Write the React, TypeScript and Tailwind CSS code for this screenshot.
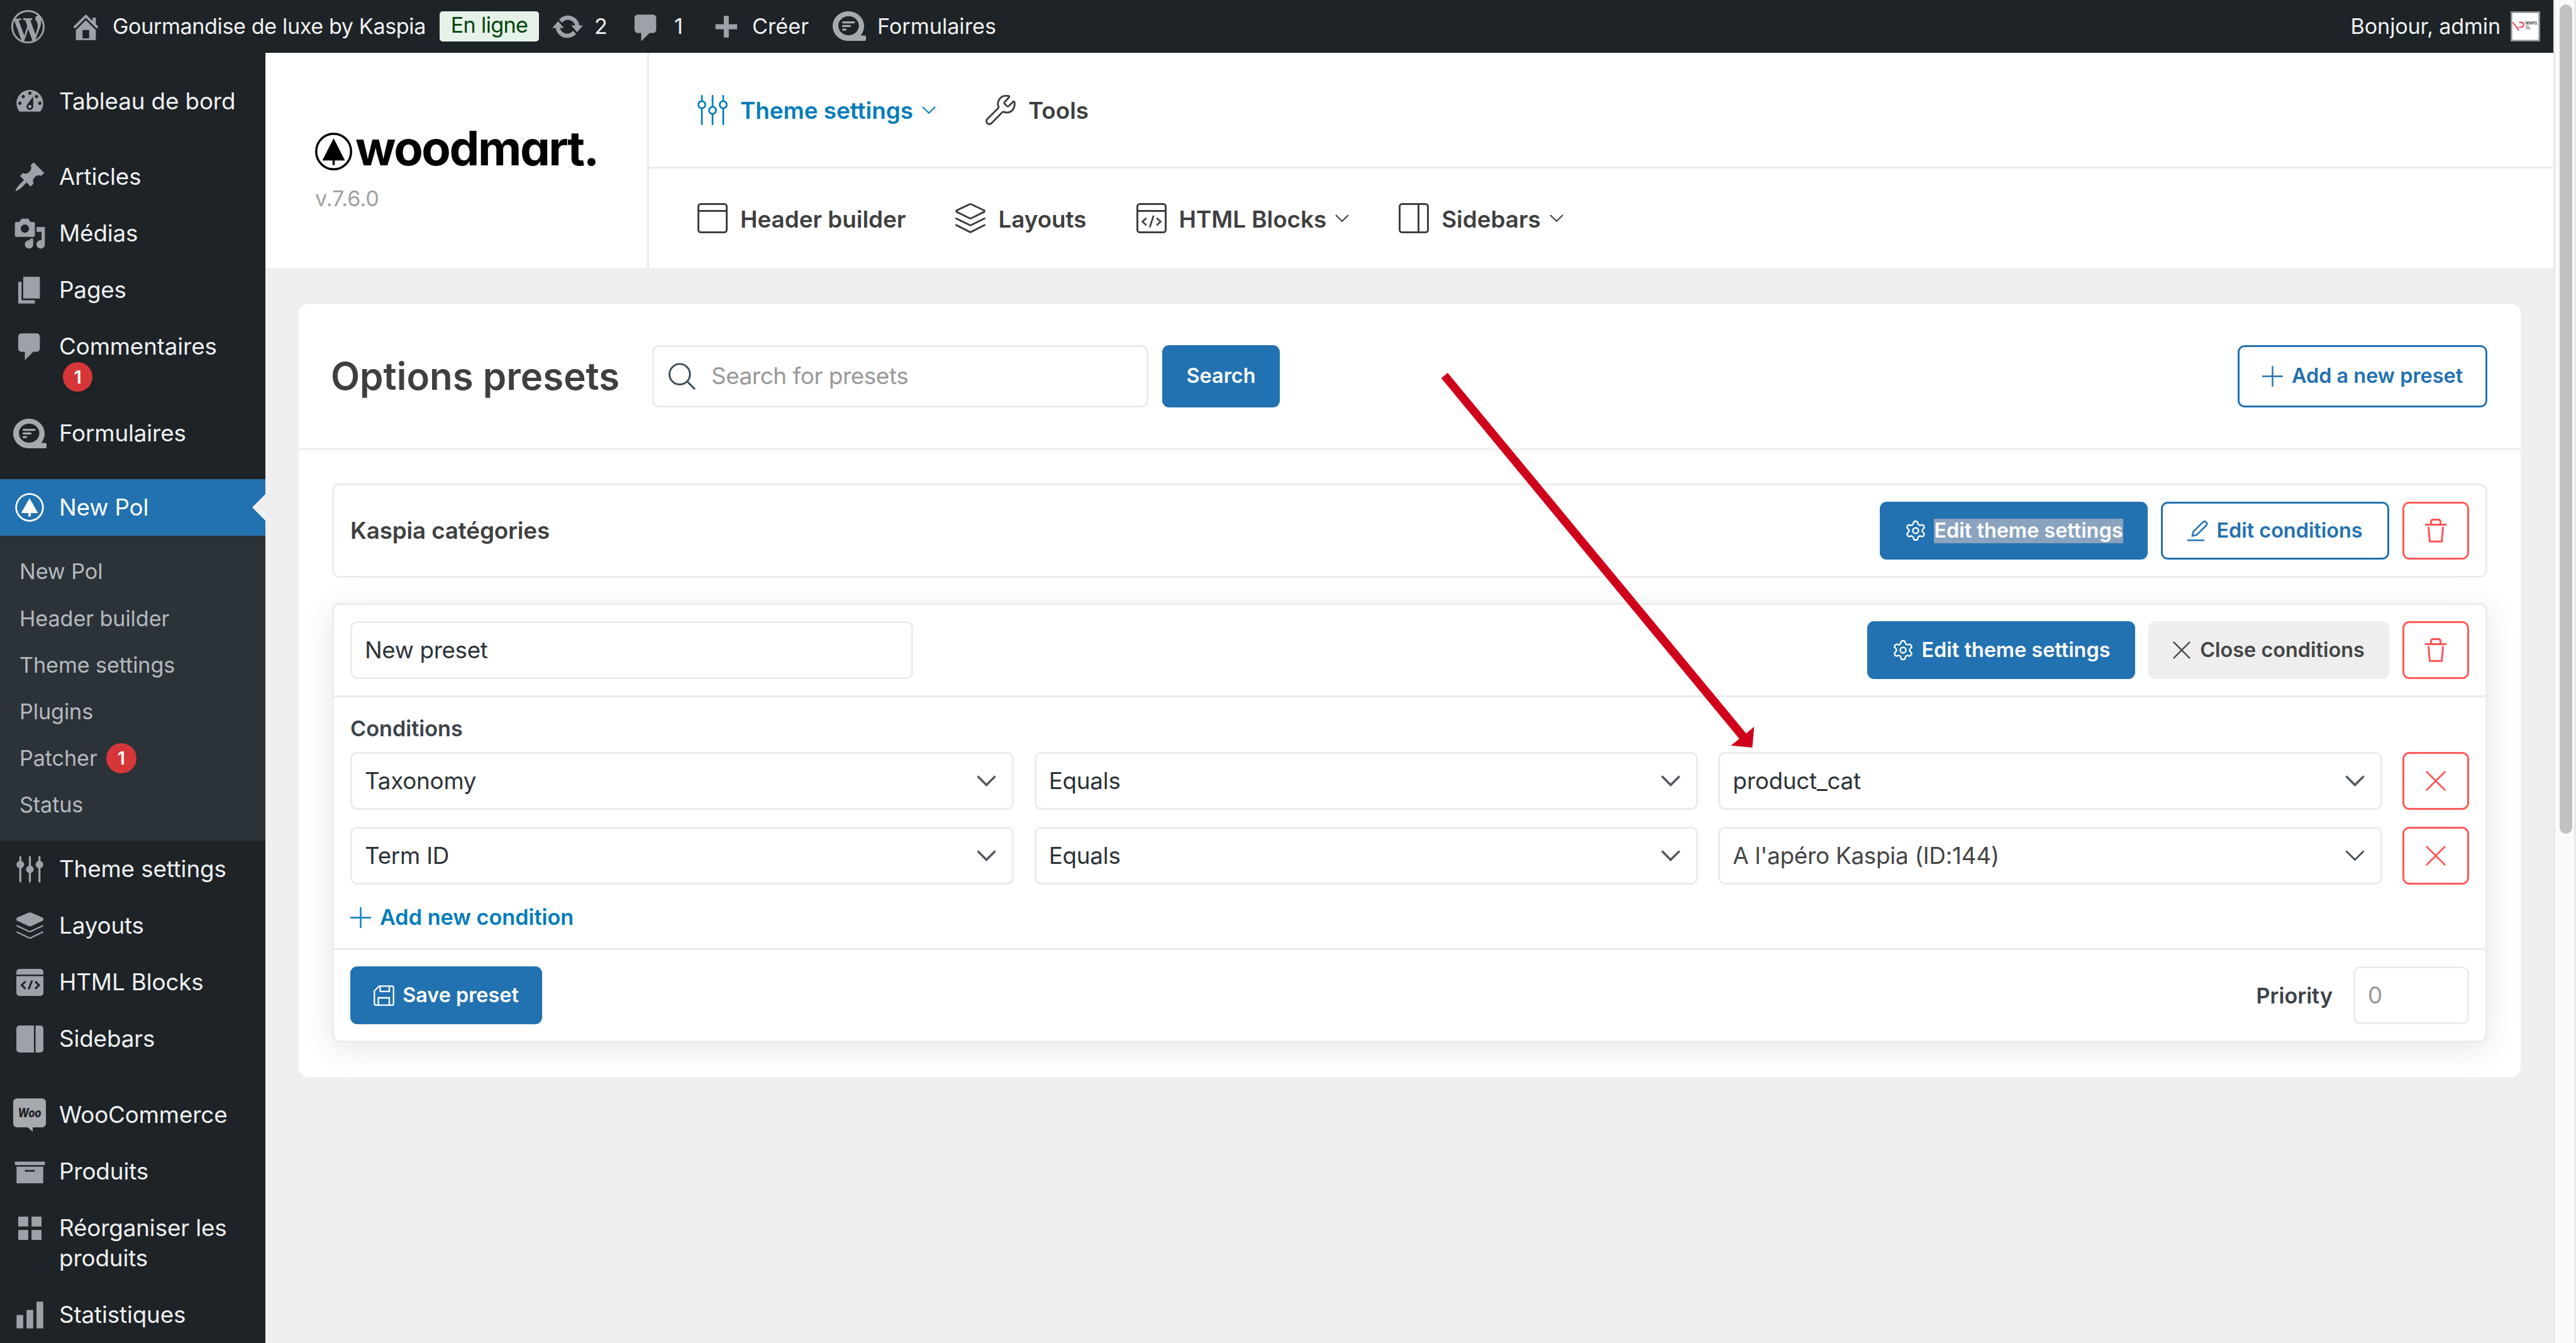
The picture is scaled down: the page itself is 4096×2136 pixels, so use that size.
import { Settings } from "lucide-react";

const dashicons = {
  wordpress:
    "M20 10c0-5.51-4.49-10-10-10C4.48 0 0 4.49 0 10c0 5.52 4.48 10 10 10 5.51 0 10-4.48 10-10zM7.78 15.37L4.37 6.22c.55-.02 1.17-.08 1.17-.08.5-.06.44-1.13-.06-1.11 0 0-1.45.11-2.37.11-.18 0-.37 0-.58-.01C4.12 2.69 6.87 1.11 10 1.11c2.33 0 4.45.87 6.05 2.34-.68-.11-1.65.39-1.65 1.58 0 .74.45 1.36.9 2.1.35.61.55 1.36.55 2.46 0 1.49-1.4 5-1.4 5l-3.03-8.37c.54-.02.82-.17.82-.17.5-.05.44-1.25-.06-1.22 0 0-1.44.12-2.38.12-.87 0-2.33-.12-2.33-.12-.5-.03-.56 1.2-.06 1.22l.92.08 1.26 3.41zM17.41 10c.24-.64.74-1.87.43-4.25.7 1.29 1.05 2.71 1.05 4.25 0 3.29-1.73 6.24-4.4 7.78.97-2.59 1.94-5.2 2.92-7.78zM6.1 18.09C3.12 16.65 1.11 13.53 1.11 10c0-1.3.23-2.48.72-3.59C3.25 10.3 4.67 14.2 6.1 18.09zm4.03-6.63l2.58 6.98c-.86.29-1.76.45-2.71.45-.79 0-1.57-.11-2.29-.33.81-2.38 1.62-4.74 2.42-7.1z",
  home: "M16 8.5l1.53 1.53-1.06 1.06L10 4.6l-6.47 6.49-1.06-1.06L10 2.5l4 4v-2h2v4zm-6-2.46l6 5.99V18H4v-5.97zM12 17v-5H8v5h4z",
  update:
    "M10.2 3.28c3.53 0 6.43 2.61 6.92 6h2.08l-3.5 4-3.5-4h2.32c-.45-1.97-2.21-3.45-4.32-3.45-1.45 0-2.73.71-3.54 1.78L4.95 5.66C6.23 4.2 8.11 3.28 10.2 3.28zm-.4 13.44c-3.52 0-6.43-2.61-6.92-6H.8l3.5-4c1.17 1.33 2.33 2.67 3.5 4H5.48c.45 1.97 2.21 3.45 4.32 3.45 1.45 0 2.73-.71 3.54-1.78l1.71 1.95c-1.28 1.46-3.15 2.38-5.25 2.38z",
  comments:
    "M5 2h9c1.1 0 2 .9 2 2v7c0 1.1-.9 2-2 2h-2l-5 5v-5H5c-1.1 0-2-.9-2-2V4c0-1.1.9-2 2-2z",
  plus: "M17 7v3h-5v5H9v-5H4V7h5V2h3v5h5z",
  dashboard:
    "M3.76 16h12.48c1.1-1.37 1.76-3.11 1.76-5 0-4.42-3.58-8-8-8s-8 3.58-8 8c0 1.89.66 3.63 1.76 5zM10 4c.55 0 1 .45 1 1s-.45 1-1 1-1-.45-1-1 .45-1 1-1zM6 6c.55 0 1 .45 1 1s-.45 1-1 1-1-.45-1-1 .45-1 1-1zm8 0c.55 0 1 .45 1 1s-.45 1-1 1-1-.45-1-1 .45-1 1-1zm-5.37 5.55L12 7v6c0 1.1-.9 2-2 2s-2-.9-2-2c0-.57.24-1.08.63-1.45zM4 10c.55 0 1 .45 1 1s-.45 1-1 1-1-.45-1-1 .45-1 1-1zm12 0c.55 0 1 .45 1 1s-.45 1-1 1-1-.45-1-1 .45-1 1-1zm-5 3c0-.55-.45-1-1-1s-1 .45-1 1 .45 1 1 1 1-.45 1-1z",
  post: "M10.44 3.02l1.82-1.82 6.36 6.35-1.83 1.82c-1.05-.68-2.48-.57-3.41.36l-.75.75c-.92.93-1.04 2.35-.35 3.41l-1.83 1.82-2.41-2.41-2.8 2.79c-.42.42-3.38 2.71-3.8 2.29s1.86-3.39 2.28-3.81l2.79-2.79L4.1 9.36l1.83-1.82c1.05.69 2.48.57 3.4-.36l.75-.75c.93-.92 1.05-2.35.36-3.41z",
  media:
    "M13 11V4c0-.55-.45-1-1-1h-1.67L9 1H5L3.67 3H2c-.55 0-1 .45-1 1v7c0 .55.45 1 1 1h10c.55 0 1-.45 1-1zM7 4.5c1.38 0 2.5 1.12 2.5 2.5S8.38 9.5 7 9.5 4.5 8.38 4.5 7 5.62 4.5 7 4.5zM14 6h5v10.5c0 1.38-1.12 2.5-2.5 2.5S14 17.88 14 16.5s1.12-2.5 2.5-2.5c.17 0 .34.02.5.05V9h-3V6zm-4 8.05V13h2v3.5c0 1.38-1.12 2.5-2.5 2.5S7 17.88 7 16.5 8.12 14 9.5 14c.17 0 .34.02.5.05z",
  page: "M6 15V2h10v13H6zm-1 1h8v2H3V5h2v11z",
  archive: "M19 4v2H1V4h18zM2 7h16v10H2V7zm11 3V9H7v1h6z",
  grid: "M3 3h6v6H3V3zm8 0h6v6h-6V3zM3 11h6v6H3v-6zm8 0h6v6h-6v-6z",
  chart: "M18 18V2h-4v16h4zm-6 0V7H8v11h4zm-6 0v-8H2v8h4z",
};

function Dashicon({ name }: { name: keyof typeof dashicons }) {
  return (
    <svg viewBox="0 0 20 20" className="size-[53px] shrink-0 fill-current">
      <path fillRule="evenodd" d={dashicons[name]} />
    </svg>
  );
}

function FormsIcon() {
  return (
    <svg viewBox="0 0 53 47" className="h-[47px] w-[53px] shrink-0 fill-[#a7aaad]">
      <path
        fillRule="evenodd"
        d="M25 0C38.8 0 50 10.5 50 23.5c0 5.6-2 10.7-5.5 15H51a2 2 0 0 1 2 2V45a2 2 0 0 1-2 2H25C11.2 47 0 36.5 0 23.5S11.2 0 25 0zm.3 7.8c-9 0-16.3 6.8-16.3 15.1S16.3 38 25.3 38s16.3-6.8 16.3-15.1S34.3 7.8 25.3 7.8z"
      />
      <path d="M16.5 16h17.5a1.6 1.6 0 0 1 0 3.2h-17.5a1.6 1.6 0 0 1 0-3.2zM16.5 21.8h11a1.6 1.6 0 0 1 0 3.2h-11a1.6 1.6 0 0 1 0-3.2zM16.5 27.6h4a1.6 1.6 0 0 1 0 3.2h-4a1.6 1.6 0 0 1 0-3.2z" />
    </svg>
  );
}

function TreeIcon() {
  return (
    <svg viewBox="0 0 46 46" className="size-[46px] shrink-0 fill-current">
      <circle cx="23" cy="23" r="21.3" fill="none" stroke="currentColor" strokeWidth="2.8" />
      <path d="M23 8.5L36.5 32H25v5.5h-4V32H9.500z" />
    </svg>
  );
}

function SlidersFilled() {
  return (
    <svg viewBox="0 0 43 43" className="size-[43px] shrink-0 fill-current">
      <path
        d="M6.3 2v39M21.5 2v39M36.7 2v39"
        stroke="currentColor"
        strokeWidth="3.3"
        strokeLinecap="round"
      />
      <circle cx="6.3" cy="14" r="6.1" />
      <circle cx="21.5" cy="21.7" r="6.1" />
      <circle cx="36.7" cy="14" r="6.1" />
    </svg>
  );
}

function LayersFilled() {
  return (
    <svg viewBox="0 0 43 43" className="size-[43px] shrink-0" fill="none">
      <path
        fill="currentColor"
        d="M19.5.6a6 6 0 0 1 4 0L42 8.500c1.3.8 1.3 4 0 4.8L23.5 22a5 5 0 0 1-4 0L1 13.300c-1.3-.8-1.3-4 0-4.800z"
      />
      <path
        d="M1.2 21.5l18.700 8.8a4 4 0 0 0 3.2 0l18.700-8.800M1.2 31.5l18.700 9a4 4 0 0 0 3.2 0l18.700-9"
        stroke="currentColor"
        strokeWidth="2.3"
        strokeLinecap="round"
      />
    </svg>
  );
}

function HtmlFilled() {
  return (
    <svg viewBox="0 0 43 43" className="size-[43px] shrink-0">
      <path
        fill="currentColor"
        d="M5 0h33a5 5 0 0 1 5 5v4H0V5a5 5 0 0 1 5-5zM0 11.5h43V38a5 5 0 0 1-5 5H5a5 5 0 0 1-5-5z"
      />
      <path
        d="M14.5 20l-6 5.8 6 5.8M30 20l6 5.8-6 5.8M25 18.5l-5.500 14"
        fill="none"
        stroke="#1d2327"
        strokeWidth="3"
      />
    </svg>
  );
}

function SidebarFilled() {
  return (
    <svg viewBox="0 0 43 43" className="size-[43px] shrink-0 fill-current">
      <path d="M5 0h23v43H5a5 5 0 0 1-5-5V5a5 5 0 0 1 5-5zM30.5 0H38a5 5 0 0 1 5 5v33a5 5 0 0 1-5 5h-7.500z" />
    </svg>
  );
}

function WooIcon() {
  return (
    <svg viewBox="0 0 52 53" className="h-[53px] w-[52px] shrink-0">
      <path fill="#a7aaad" d="M6 0h40a6 6 0 0 1 6 6v34a6 6 0 0 1-6 6H31v7l-8-7H6a6 6 0 0 1-6-6V6a6 6 0 0 1 6-6z" />
      <text
        x="26"
        y="30"
        textAnchor="middle"
        textLength="37"
        lengthAdjust="spacingAndGlyphs"
        fill="#1d2327"
        fontFamily="Inter, sans-serif"
        fontWeight="800"
        fontStyle="italic"
        fontSize="20"
      >
        Woo
      </text>
    </svg>
  );
}

// Outline icons of the theme, drawn on a 48px box
function NavIcon({ name }: { name: string }) {
  return (
    <svg
      viewBox="0 0 48 48"
      className="size-12 shrink-0"
      fill="none"
      stroke="currentColor"
      strokeWidth="3"
      strokeLinejoin="round"
    >
      {name === "sliders" && (
        <g strokeLinecap="round" strokeWidth="2.7">
          <path d="M7 1.300v8M7 22v24.700M24 1.300v17M24 31v15.700M41 1.300v8M41 22v24.700" />
          <circle cx="7" cy="15.5" r="5.6" />
          <circle cx="24" cy="24.5" r="5.6" />
          <circle cx="41" cy="15.5" r="5.6" />
        </g>
      )}
      {name === "wrench" && (
        <path
          strokeWidth="2.9"
          d="M35.5 1.5c2.5.3 3 1.2 1.5 2.7l-6.5 7c-.8 1-.8 2 0 3l3.5 3.3c1 .9 2 .9 3 0l7-6.700c1-1 1.8-.7 2.1.7C47.5 21.5 41.5 28 34 28c-1.8 0-3.5-.5-5-1-1-.3-1.8 0-2.5.7L9.5 44.900c-1.6 1.5-4 1.8-5.7.8C1.2 44 .7 40.7 2.7 38.5L20 21.200c.8-.8 1-1.6.6-2.700C17.5 10.5 23.5 1.2 33 1.400z"
        />
      )}
      {(name === "header" || name === "html" || name === "sidebar") && (
        <rect x="1.5" y="1.5" width="45" height="45" rx="4" />
      )}
      {(name === "header" || name === "html") && <path d="M1.5 12.5h45" />}
      {name === "html" && (
        <path strokeWidth="2.7" strokeLinecap="round" d="M15 24.5l-5.500 5 5.500 5M33 24.5l5.500 5-5.500 5M27 21l-5.500 16.500" />
      )}
      {name === "sidebar" && <path d="M31.5 1.500v45" />}
      {name === "layers" && (
        <g strokeLinecap="round">
          <path d="M22.5 2a3.500 3.500 0 0 1 3 0L45.6 11.500c1.2.6 1.2 2 0 2.600L25.5 24a3.500 3.500 0 0 1-3 0L2.4 14.100c-1.2-.6-1.2-2 0-2.600z" />
          <path d="M1.5 24.5L24 35.5l22.500-11M1.5 35L24 46.3 46.5 35" />
        </g>
      )}
    </svg>
  );
}

function Caret() {
  return (
    <svg viewBox="0 0 22 12" className="ml-3.5 h-3 w-[22px]" fill="none" stroke="currentColor" strokeWidth="2">
      <path d="M1 1l10 9.800L21 1" />
    </svg>
  );
}

function PlusIcon() {
  return (
    <svg viewBox="0 0 33 33" className="size-[33px] shrink-0" fill="none" stroke="currentColor" strokeWidth="2.4">
      <path d="M16.5 0v33M0 16.500h33" />
    </svg>
  );
}

function GearIcon() {
  return <Settings className="size-9 shrink-0" strokeWidth={1.6} />;
}

function PencilIcon() {
  return (
    <svg viewBox="0 0 33 33" className="size-[33px] shrink-0" fill="none" stroke="currentColor" strokeWidth="2.5">
      <path strokeLinejoin="round" d="M7.8 24.5l1.700-7L25 2.300c1.5-1.400 3.3-1.300 4.800 0 1.8 1.6 2 3.5.5 5.200L14.8 22.800z" />
      <path d="M0 31.300h27" />
    </svg>
  );
}

function CloseIcon({ size }: { size: string }) {
  return (
    <svg viewBox="0 0 32 32" className={size} fill="none" stroke="currentColor" strokeWidth="2.5">
      <path d="M1 1l30 30M31 1L1 31" />
    </svg>
  );
}

function TrashIcon() {
  return (
    <svg viewBox="0 0 34 38" className="h-[38px] w-[34px]" fill="none" stroke="currentColor" strokeWidth="2.9">
      <path d="M0 9.500h34M9.5 9V4.500a3 3 0 0 1 3-3h9a3 3 0 0 1 3 3V9" />
      <path strokeLinejoin="round" strokeLinecap="round" d="M5.5 14l2 22.300h19l2-22.300" />
    </svg>
  );
}

function SaveIcon() {
  return (
    <svg viewBox="0 0 33 33" className="size-[33px] shrink-0" fill="none" stroke="currentColor" strokeWidth="2.3">
      <path strokeLinejoin="round" d="M9 1.300h20.500a2.200 2.200 0 0 1 2.200 2.200v26a2.200 2.200 0 0 1-2.200 2.200h-26a2.200 2.200 0 0 1-2.200-2.200V9z" />
      <path d="M10.5 1.500v8.300h14.500V1.500M7.5 31.500V20h17.500v11.500" />
    </svg>
  );
}

function ButtonLabel({ children }: { children: string }) {
  return <span className="text-[32.4px] font-semibold whitespace-nowrap">{children}</span>;
}

function DeleteButton({ icon }: { icon: "trash" | "close" }) {
  return (
    <button className="flex h-[92px] w-[106px] shrink-0 items-center justify-center rounded-[11px] border-[3px] border-[#ff5a5a] bg-white text-[#ff5252]">
      {icon === "trash" ? <TrashIcon /> : <CloseIcon size="size-8" />}
    </button>
  );
}

function Select({ value, thin }: { value: string; thin?: boolean }) {
  return (
    <div className="flex h-[92px] flex-1 items-center justify-between rounded-[11px] border-[3px] border-[#ececec] bg-white pr-[25px] pl-5 tracking-[-0.007em]">
      <span className={thin ? "text-[36.8px] text-[#444444]" : "text-[36.8px] text-[#2c3338]"}>{value}</span>
      <svg viewBox="0 0 31 18" className="h-[18px] w-[31px]" fill="none" stroke={thin ? "#3c434a" : "#50575e"} strokeWidth={thin ? 2.5 : 3.4}>
        <path d="M1.5 1.500l14 14 14-14" />
      </svg>
    </div>
  );
}

function MenuItem({ icon, label, badge }: { icon: React.ReactNode; label: string; badge?: string }) {
  return (
    <div className="flex min-h-[90px] shrink-0 items-start text-[#f0f0f1]">
      <div className="flex h-[90px] w-[94px] shrink-0 items-center justify-center text-[#9ca2a7]">{icon}</div>
      <div className="w-[300px] py-[21px] text-[36.8px] leading-[48px]">
        {label}
        {badge && (
          <span className="mt-px ml-[6px] flex size-[47px] items-center justify-center rounded-full bg-[#d63638] text-[29px] font-semibold text-white">
            {badge}
          </span>
        )}
      </div>
    </div>
  );
}

const submenu = ["New Pol", "Header builder", "Theme settings", "Plugins", "Patcher", "Status"];

function Sidebar() {
  return (
    <aside className="flex w-[422px] shrink-0 flex-col bg-[#1d2327] pt-8 tracking-[-0.009em]">
      <MenuItem icon={<Dashicon name="dashboard" />} label="Tableau de bord" />
      <div className="h-[30px] shrink-0" />
      <MenuItem icon={<Dashicon name="post" />} label="Articles" />
      <MenuItem icon={<Dashicon name="media" />} label="Médias" />
      <MenuItem icon={<Dashicon name="page" />} label="Pages" />
      <MenuItem icon={<Dashicon name="comments" />} label="Commentaires" badge="1" />
      <MenuItem icon={<FormsIcon />} label="Formulaires" />
      <div className="h-[28px] shrink-0" />
      <div className="relative flex h-[90px] shrink-0 items-center bg-[#2271b1] text-white">
        <div className="flex w-[94px] items-center justify-center">
          <TreeIcon />
        </div>
        <span className="text-[36.8px]">New Pol</span>
        <div className="absolute top-[24px] right-0 border-y-[21px] border-r-[21px] border-y-transparent border-r-[#f0f0f1]" />
      </div>
      <div className="h-[485px] shrink-0 bg-[#2c3338] pt-5 pl-[31px] text-[34.2px] tracking-[-0.003em] text-[#b4b9be]">
        {submenu.map((item) => (
          <div key={item} className="flex h-[74.2px] items-center gap-[14px]">
            <span>{item}</span>
            {item === "Patcher" && (
              <span className="flex size-12 items-center justify-center rounded-full bg-[#d63638] text-[29px] font-semibold text-white">
                1
              </span>
            )}
          </div>
        ))}
      </div>
      <MenuItem icon={<SlidersFilled />} label="Theme settings" />
      <MenuItem icon={<LayersFilled />} label="Layouts" />
      <MenuItem icon={<HtmlFilled />} label="HTML Blocks" />
      <MenuItem icon={<SidebarFilled />} label="Sidebars" />
      <div className="h-[31px] shrink-0" />
      <MenuItem icon={<WooIcon />} label="WooCommerce" />
      <MenuItem icon={<Dashicon name="archive" />} label="Produits" />
      <MenuItem icon={<Dashicon name="grid" />} label="Réorganiser les produits" />
      <MenuItem icon={<Dashicon name="chart" />} label="Statistiques" />
    </aside>
  );
}

function AdminBar() {
  return (
    <div className="flex h-[84px] shrink-0 items-center bg-[#1d2327] pl-[18px] text-[34.2px] whitespace-nowrap text-[#f0f0f1]">
      <div className="flex w-[92px] text-[#9ca2a7]">
        <Dashicon name="wordpress" />
      </div>
      <div className="flex w-[589px] items-center">
        <div className="w-[69px] text-[#9ca2a7]">
          <Dashicon name="home" />
        </div>
        <span className="tracking-[-0.012em]">Gourmandise de luxe by Kaspia</span>
      </div>
      <div className="flex h-12 w-[158px] items-center justify-center rounded-[5px] bg-[#e6f2e8] pb-1 tracking-[-0.02em] text-[#00450c]">
        En ligne
      </div>
      <div className="ml-[19px] flex w-[125px] items-center gap-4">
        <div className="text-[#9ca2a7]">
          <Dashicon name="update" />
        </div>
        <span>2</span>
      </div>
      <div className="flex w-[126px] items-center gap-[18px]">
        <div className="mt-1 text-[#9ca2a7]">
          <Dashicon name="comments" />
        </div>
        <span>1</span>
      </div>
      <div className="flex w-[197px] items-center gap-[16px]">
        <div className="mt-2 text-[#9ca2a7]">
          <Dashicon name="plus" />
        </div>
        <span>Créer</span>
      </div>
      <div className="flex items-center gap-[18px]">
        <FormsIcon />
        <span>Formulaires</span>
      </div>
      <div className="mr-[21px] ml-auto flex items-center gap-4">
        <span className="tracking-[-0.005em]">Bonjour, admin</span>
        <svg viewBox="0 0 47 48" className="h-12 w-[47px]">
          <rect x="1.3" y="1.3" width="44.4" height="45.4" fill="#fff" stroke="#8c8f94" strokeWidth="2.6" />
          <path d="M3.5 17.5l10 13M13.5 17.500h3.500a3.800 3.800 0 0 1 0 7.600h-3.500" fill="none" stroke="#ee2c45" strokeWidth="1.9" />
          <text x="23.5" y="20.5" fontSize="5.5" fontWeight="600" textLength="19.5" fill="#444" fontFamily="Inter, sans-serif">
            NEW POL
          </text>
          <path d="M24 23.200h4.500M24 25.500h6.500M24 27.800h8" stroke="#888" strokeWidth="1.3" />
        </svg>
      </div>
    </div>
  );
}

function NavItem({ icon, label, caret, active }: { icon: string; label: string; caret?: boolean; active?: boolean }) {
  return (
    <div className={active ? "flex items-center text-[#007cba]" : "flex items-center text-[#3f3f3f]"}>
      <NavIcon name={icon} />
      <span className="ml-[20px] pt-[3px] text-[36.8px] font-semibold whitespace-nowrap">{label}</span>
      {caret && <Caret />}
    </div>
  );
}

function ThemeHeader() {
  return (
    <header className="flex h-[342px] shrink-0 bg-white">
      <div className="w-[607px] shrink-0 pt-[118px] pl-[79px]">
        <div className="flex h-[78px] items-end">
          <svg viewBox="0 0 59 60" className="mb-[9px] h-[60px] w-[59px]">
            <ellipse cx="29.5" cy="30" rx="27.7" ry="28.2" fill="none" stroke="#000" strokeWidth="3.5" />
            <path d="M29.5 9L47.5 44.300H31.2V51.500H27.8V44.300H11.500z" />
          </svg>
          <span className="mb-[3px] ml-[5px] text-[76px] leading-[84px] font-bold tracking-[-0.032em] text-black [font-feature-settings:'cv11']">
            woodmart.
          </span>
        </div>
        <div className="mt-[14px] text-[34.2px] leading-[44px] text-[#a0a0a0]">v.7.6.0</div>
      </div>
      <div className="flex flex-1 flex-col border-l-[3px] border-[#ececec]">
        <div className="flex h-[184px] items-center gap-[79px] border-b-[3px] border-[#ececec] pl-[77px]">
          <NavItem icon="sliders" label="Theme settings" caret active />
          <NavItem icon="wrench" label="Tools" />
        </div>
        <div className="flex flex-1 items-center gap-[79px] pl-[77px]">
          <NavItem icon="header" label="Header builder" />
          <NavItem icon="layers" label="Layouts" />
          <NavItem icon="html" label="HTML Blocks" caret />
          <NavItem icon="sidebar" label="Sidebars" caret />
        </div>
      </div>
    </header>
  );
}

function PresetsPanel() {
  return (
    <section className="mt-[57px] ml-[53px] w-[3533px] shrink-0 rounded-[16px] bg-white">
      <div className="flex h-[233px] items-center border-b-[3px] border-[#ececec] pr-[53px] pl-[51px]">
        <h1 className="w-[511px] text-[60px] font-semibold whitespace-nowrap text-[#3f3f3f]">Options presets</h1>
        <div className="flex h-[99px] w-[789px] items-center rounded-[11px] border-[3px] border-[#ececec] pl-[23px]">
          <svg viewBox="0 0 43 43" className="size-[43px]" fill="none" stroke="#3c4a54" strokeWidth="2.9">
            <circle cx="17.8" cy="18.2" r="16.3" />
            <path d="M30 30l12 12" />
          </svg>
          <span className="ml-[25px] text-[36.8px] tracking-[-0.011em] text-[#999999]">Search for presets</span>
        </div>
        <button className="ml-[22px] flex h-[99px] w-[187px] items-center justify-center rounded-[11px] bg-[#2271b1] text-white">
          <ButtonLabel>Search</ButtonLabel>
        </button>
        <button className="ml-auto flex h-[99px] w-[397px] items-center justify-center gap-[14px] rounded-[11px] border-[3px] border-[#2271b1] text-[#2271b1]">
          <PlusIcon />
          <ButtonLabel>Add a new preset</ButtonLabel>
        </button>
      </div>
      <div className="flex flex-col gap-10 p-[53px] pb-[55px]">
        <div className="flex h-[150px] items-center gap-[21px] rounded-[12px] border-[3px] border-[#ececec] px-[26px]">
          <span className="mr-auto text-[36.8px] font-semibold tracking-[-0.004em] text-[#3f3f3f]">Kaspia catégories</span>
          <button className="flex h-[92px] w-[426px] items-center justify-center gap-[11px] rounded-[11px] bg-[#2271b1] text-white">
            <GearIcon />
            <span className="flex h-[39px] items-center bg-[#8aa3be]">
              <ButtonLabel>Edit theme settings</ButtonLabel>
            </span>
          </button>
          <button className="flex h-[92px] w-[363px] items-center justify-center gap-[13px] rounded-[11px] border-[3px] border-[#2271b1] text-[#2271b1]">
            <PencilIcon />
            <ButtonLabel>Edit conditions</ButtonLabel>
          </button>
          <DeleteButton icon="trash" />
        </div>
        <div className="rounded-[12px] border-[3px] border-[#ececec] bg-white shadow-[0_10px_50px_rgba(0,0,0,0.1)]">
          <div className="flex h-[147px] items-center gap-[21px] border-b-[3px] border-[#ececec] px-[26px]">
            <div className="mr-auto flex h-[92px] w-[895px] items-center rounded-[11px] border-[3px] border-[#ececec] pl-[20px] text-[36.8px] tracking-[-0.01em] text-[#2c3338]">
              New preset
            </div>
            <button className="flex h-[92px] w-[426px] items-center justify-center gap-[11px] rounded-[11px] bg-[#2271b1] text-white">
              <GearIcon />
              <ButtonLabel>Edit theme settings</ButtonLabel>
            </button>
            <button className="flex h-[92px] w-[383px] items-center justify-center gap-[15px] rounded-[11px] bg-[#eeeeee] text-[#444444]">
              <CloseIcon size="size-7" />
              <ButtonLabel>Close conditions</ButtonLabel>
            </button>
            <DeleteButton icon="trash" />
          </div>
          <div className="px-[26px] pt-[25px] text-[34.2px]">
            <div className="mb-3 leading-[50px] font-semibold text-[#3c434a]">Conditions</div>
            <div className="flex flex-col gap-[27px]">
              <div className="flex gap-[32.5px]">
                <Select value="Taxonomy" />
                <Select value="Equals" />
                <Select value="product_cat" />
                <DeleteButton icon="close" />
              </div>
              <div className="flex gap-[32.5px]">
                <Select value="Term ID" />
                <Select value="Equals" />
                <Select value="A l'apéro Kaspia (ID:144)" thin />
                <DeleteButton icon="close" />
              </div>
            </div>
            <div className="flex h-[101px] items-center gap-[14px] pt-[3px] text-[#007cba]">
              <PlusIcon />
              <span className="font-semibold">Add new condition</span>
            </div>
          </div>
          <div className="flex h-[147px] items-center border-t-[3px] border-[#ececec] px-[26px]">
            <button className="flex h-[92px] w-[305px] items-center justify-center gap-[13px] rounded-[11px] bg-[#2271b1] text-white">
              <SaveIcon />
              <ButtonLabel>Save preset</ButtonLabel>
            </button>
            <span className="mr-[33px] ml-auto pt-0.5 text-[34.2px] font-semibold text-[#3c434a]">Priority</span>
            <div className="flex h-[92px] w-[184px] items-center rounded-[11px] border-[3px] border-[#ececec] pl-5 text-[36.8px] text-[#999999]">
              0
            </div>
          </div>
        </div>
      </div>
    </section>
  );
}

export default function App() {
  return (
    <div className="relative flex h-[2136px] w-[4096px] overflow-hidden bg-[#efefef] font-['Inter',sans-serif]">
      <div className="flex w-[4060px] shrink-0 flex-col">
        <AdminBar />
        <div className="flex min-h-0 flex-1">
          <Sidebar />
          <main className="flex flex-1 flex-col">
            <ThemeHeader />
            <PresetsPanel />
          </main>
        </div>
      </div>
      {/* Page scrollbar */}
      <div className="h-full flex-1 border-x-[3px] border-[#e9e9e9] bg-[#fafafa] pt-[7px] pl-[7px]">
        <div className="h-[1319px] w-[20px] rounded-full bg-[#c1c1c1]" />
      </div>
      <svg viewBox="0 0 500 600" className="absolute top-[592px] left-[2291px] h-[600px] w-[500px]">
        <path
          fill="#d0021b"
          d="M10.9.9L485.5 574.6L498.3 563.7L495.3 597.1L461.4 593.7L474.6 582.9L.7 9.600z"
        />
      </svg>
    </div>
  );
}
